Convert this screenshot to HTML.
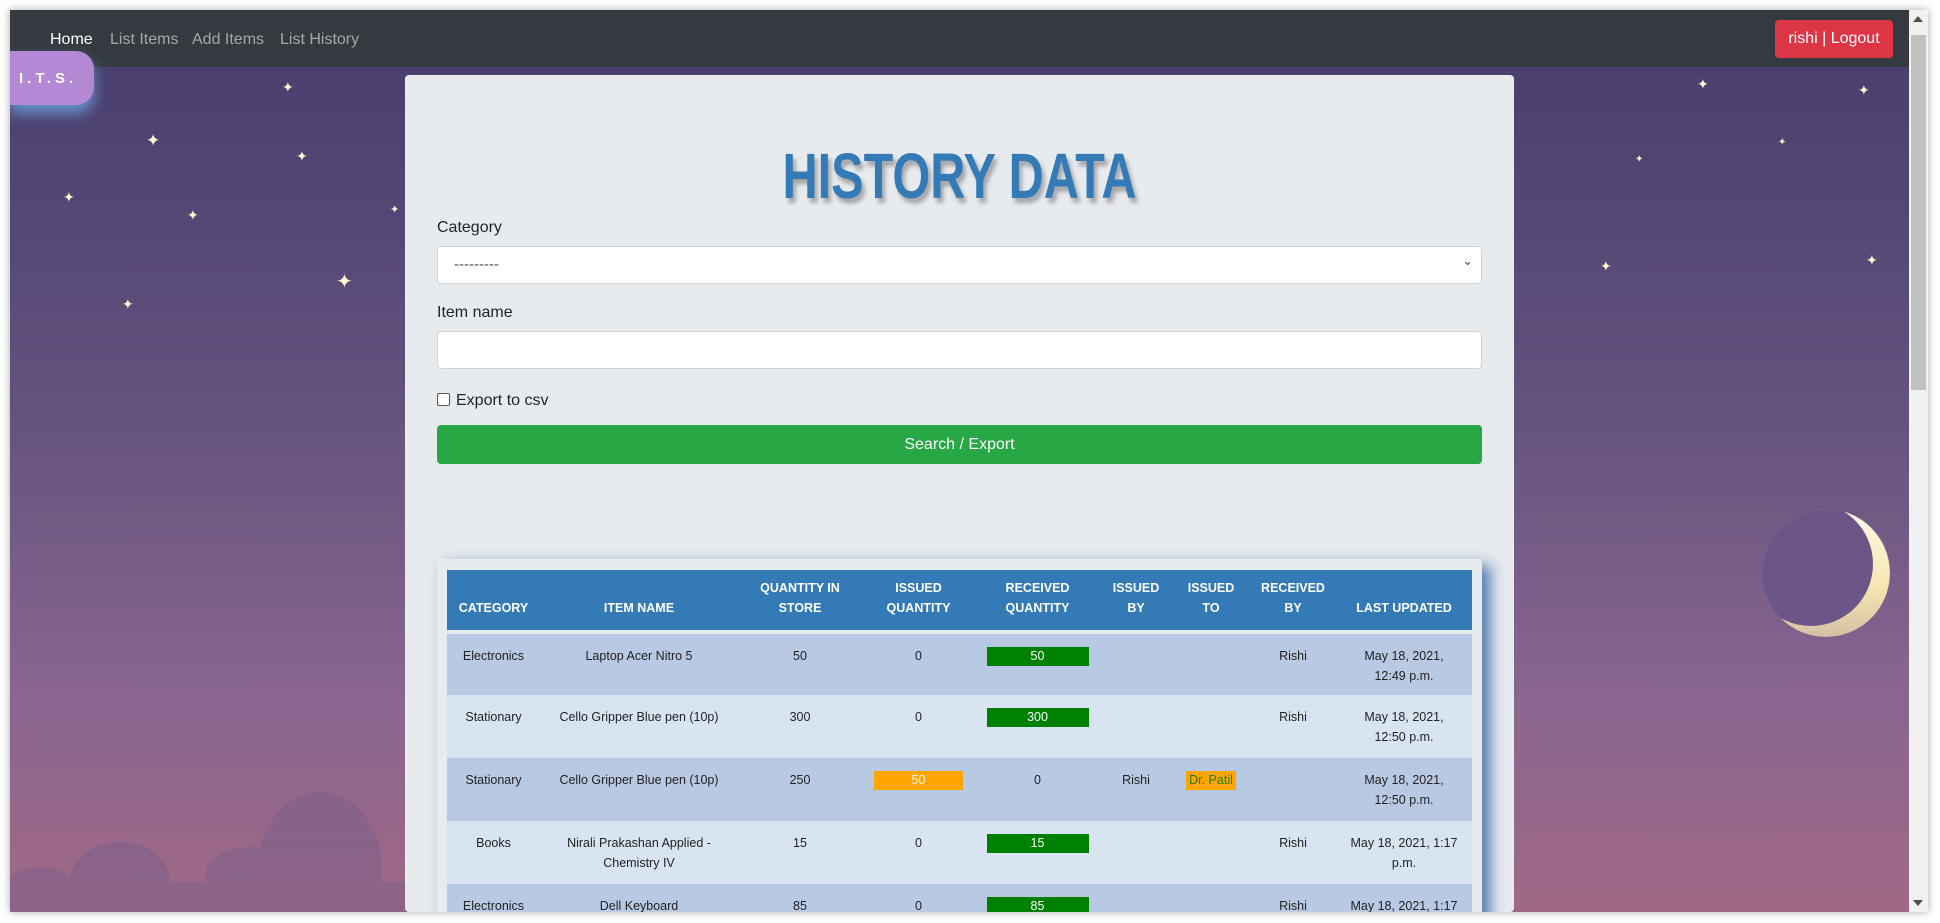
<!DOCTYPE html>
<html><head><meta charset="utf-8"><style>
*{box-sizing:border-box;margin:0;padding:0}
html,body{overflow:hidden}
body{width:1940px;height:923px;background:#fff;position:relative;font-family:"Liberation Sans",sans-serif}
#win{position:absolute;left:10px;top:10px;width:1918px;height:902px;overflow:hidden;box-shadow:0 0 8px rgba(0,0,0,.35)}
#bg{position:absolute;left:0;top:57px;width:1899px;height:845px;background:linear-gradient(#4a3f6e 0%,#63527e 40%,#8a6690 75%,#a06886 100%)}
#nav{position:absolute;left:0;top:0;width:1899px;height:57px;background:#343a40}
#nav a{position:absolute;top:21px;font-size:16px;color:rgba(255,255,255,.55);text-decoration:none}
#logout{position:absolute;left:1765px;top:10px;width:118px;height:38px;background:#dc3545;border-radius:4px;color:#fff;font-size:16px;text-align:center;line-height:38px}
#its{position:absolute;left:0;top:41px;width:84px;height:54px;background:#b388d4;border-radius:0 18px 18px 0;color:#fff;font-weight:bold;font-size:15px;letter-spacing:4px;line-height:56px;padding-left:9px;box-shadow:0 8px 14px rgba(110,170,230,.8)}
.star{position:absolute;color:#fff6d0;font-size:14px;line-height:1}
#sb{position:absolute;left:1899px;top:0;width:19px;height:902px;background:#f1f1f1}
#thumb{position:absolute;left:1901px;top:25px;width:15px;height:355px;background:#c1c1c1}
#card{position:absolute;left:395px;top:65px;width:1109px;height:837px;background:#e8ebee;border-radius:4px;overflow:hidden}
h1{position:absolute;left:0;width:1109px;top:64px;text-align:center;font-size:64px;color:#337ab7;font-weight:bold;transform:scaleX(.76);text-shadow:4px 5px 5px rgba(0,0,0,.3)}
.lbl{position:absolute;left:32px;font-size:16px;color:#212529}
.inp{position:absolute;left:32px;width:1045px;height:38px;background:#fff;border:1px solid #ced4da;border-radius:4px}
#btn{position:absolute;left:32px;top:350px;width:1045px;height:39px;background:#28a745;border-radius:4px;color:#fff;text-align:center;line-height:39px;font-size:16px}
#tw{position:absolute;left:32px;top:484px;width:1045px;height:500px;background:#e8ebee;box-shadow:8px 6px 14px rgba(40,90,160,.8)}
table{position:absolute;left:10px;top:11px;border-collapse:collapse;width:1025px;font-size:12.5px;color:#222}
th{background:#337ab7;color:#fff;font-weight:bold;height:62px;vertical-align:bottom;padding-bottom:12px;line-height:20px;text-align:center;border-bottom:4px solid #e8ebee}
td{height:63px;text-align:center;line-height:20px;vertical-align:top;padding-top:12px}
tr.a td{background:#b8c9e3}tr.b td{background:#d9e4f2}
.g{display:inline-block;width:102px;height:19px;background:#008000;color:#fff;line-height:19px}
.o{display:inline-block;width:89px;height:19px;background:#ffa500;color:#fff;line-height:19px}
.p{display:inline-block;padding:0 3px;background:#ffa500;color:#2a7a00;line-height:19px}
</style></head><body>
<div id="win">
<div id="bg">
<svg width="1899" height="845" style="position:absolute;left:0;top:0">
<defs><linearGradient id="m" x1="0" y1="0" x2="0" y2="1"><stop offset="0" stop-color="#fffbe8"/><stop offset=".6" stop-color="#f6e6b0"/><stop offset="1" stop-color="#d6c0a6"/></linearGradient>
<clipPath id="c"><circle cx="1816" cy="506" r="64"/></clipPath></defs>
<circle cx="1816" cy="506" r="64" fill="#6a5586"/>
<g clip-path="url(#c)">
<circle cx="1816" cy="506" r="64" fill="url(#m)"/>
<circle cx="1801" cy="497" r="62" fill="#6b5687"/>
</g>
<g fill="#7a5e8a" opacity=".45">
<ellipse cx="310" cy="800" rx="62" ry="75"/>
<ellipse cx="110" cy="815" rx="50" ry="40"/>
<ellipse cx="240" cy="810" rx="45" ry="30"/>
<ellipse cx="30" cy="830" rx="40" ry="30"/>
<rect x="0" y="815" width="400" height="40"/>
</g></svg>
</div>
<div id="nav">
<a style="left:40px;color:#fff">Home</a><a style="left:100px">List Items</a><a style="left:182px">Add Items</a><a style="left:270px">List History</a>
<div id="logout">rishi | Logout</div>
</div>
<div id="its">I.T.S.</div>
<span class="star" style="left:272px;top:70px">✦</span>
<span class="star" style="left:136px;top:122px;font-size:17px">✦</span>
<span class="star" style="left:286px;top:139px">✦</span>
<span class="star" style="left:53px;top:180px">✦</span>
<span class="star" style="left:177px;top:198px">✦</span>
<span class="star" style="left:326px;top:262px;font-size:20px">✦</span>
<span class="star" style="left:112px;top:287px">✦</span>
<span class="star" style="left:380px;top:195px;font-size:11px">✦</span>
<span class="star" style="left:1687px;top:67px">✦</span>
<span class="star" style="left:1848px;top:73px">✦</span>
<span class="star" style="left:1768px;top:128px;font-size:10px">✦</span>
<span class="star" style="left:1625px;top:145px;font-size:10px">✦</span>
<span class="star" style="left:1590px;top:249px">✦</span>
<span class="star" style="left:1856px;top:243px">✦</span>
<div id="card">
<h1>HISTORY DATA</h1>
<div class="lbl" style="top:144px">Category</div>
<div class="inp" style="top:171px;font-size:15px;color:#495057;padding:9px 0 0 16px">---------<span style="position:absolute;right:8px;top:6px;font-size:13px">&#8964;</span></div>
<div class="lbl" style="top:229px">Item name</div>
<div class="inp" style="top:256px"></div>
<div class="lbl" style="top:317px;left:32px"><span style="display:inline-block;width:13px;height:13px;border:1px solid #555;border-radius:2px;background:#fff;vertical-align:-1px;margin-right:6px"></span>Export to csv</div>
<div id="btn">Search / Export</div>
<div id="tw">
<table>
<tr><th style="width:93px">CATEGORY</th><th style="width:198px">ITEM NAME</th><th style="width:124px">QUANTITY IN<br>STORE</th><th style="width:113px">ISSUED<br>QUANTITY</th><th style="width:125px">RECEIVED<br>QUANTITY</th><th style="width:72px">ISSUED<br>BY</th><th style="width:78px">ISSUED<br>TO</th><th style="width:86px">RECEIVED<br>BY</th><th>LAST UPDATED</th></tr>
<tr class="a"><td>Electronics</td><td>Laptop Acer Nitro 5</td><td>50</td><td>0</td><td><span class="g">50</span></td><td></td><td></td><td>Rishi</td><td>May 18, 2021,<br>12:49 p.m.</td></tr>
<tr class="b"><td>Stationary</td><td>Cello Gripper Blue pen (10p)</td><td>300</td><td>0</td><td><span class="g">300</span></td><td></td><td></td><td>Rishi</td><td>May 18, 2021,<br>12:50 p.m.</td></tr>
<tr class="a"><td>Stationary</td><td>Cello Gripper Blue pen (10p)</td><td>250</td><td><span class="o">50</span></td><td>0</td><td>Rishi</td><td><span class="p">Dr. Patil</span></td><td></td><td>May 18, 2021,<br>12:50 p.m.</td></tr>
<tr class="b"><td>Books</td><td>Nirali Prakashan Applied -<br>Chemistry IV</td><td>15</td><td>0</td><td><span class="g">15</span></td><td></td><td></td><td>Rishi</td><td>May 18, 2021, 1:17<br>p.m.</td></tr>
<tr class="a"><td>Electronics</td><td>Dell Keyboard</td><td>85</td><td>0</td><td><span class="g">85</span></td><td></td><td></td><td>Rishi</td><td>May 18, 2021, 1:17<br>p.m.</td></tr>
</table>
</div>
</div>
<div id="sb"></div><div id="thumb"></div>
<div style="position:absolute;left:1903px;top:6px;width:0;height:0;border-left:5px solid transparent;border-right:5px solid transparent;border-bottom:6px solid #505050"></div>
<div style="position:absolute;left:1903px;top:890px;width:0;height:0;border-left:5px solid transparent;border-right:5px solid transparent;border-top:6px solid #505050"></div>
</div>
</body></html>
